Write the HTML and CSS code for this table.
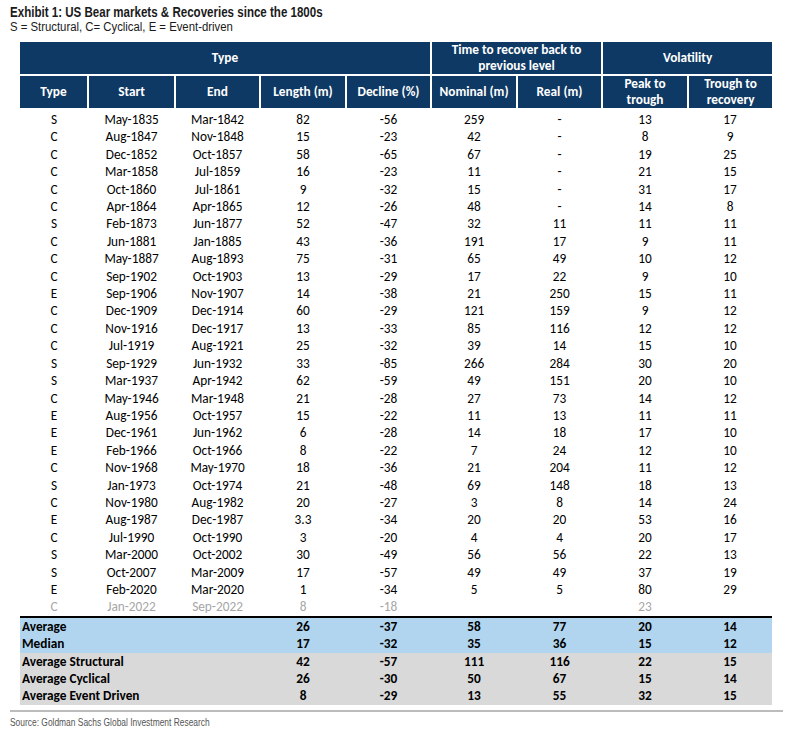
FILE: index.html
```html
<!DOCTYPE html>
<html>
<head>
<meta charset="utf-8">
<link rel="stylesheet" href="styles.css">
</head>
<body>
<div class="exhibit">
  <h1 class="title"><span class="squeeze t-squeeze">Exhibit 1: US Bear markets &amp; Recoveries since the 1800s</span></h1>
  <p class="subtitle"><span class="squeeze s-squeeze">S = Structural, C= Cyclical, E = Event-driven</span></p>
  <table class="bear">
    <colgroup>
      <col class="c-type"><col class="c87"><col class="c85"><col class="c86"><col class="c85"><col class="c86"><col class="c85"><col class="c86"><col class="c84">
    </colgroup>
    <thead>
      <tr class="h1">
        <th colspan="5">Type</th>
        <th colspan="2">Time to recover back to<br>previous level</th>
        <th colspan="2">Volatility</th>
      </tr>
      <tr class="h2">
        <th>Type</th><th>Start</th><th>End</th><th>Length (m)</th><th>Decline (%)</th><th>Nominal (m)</th><th>Real (m)</th><th>Peak to<br>trough</th><th>Trough to<br>recovery</th>
      </tr>
    </thead>
    <tbody class="data">
      <tr class="first"><td>S</td><td>May-1835</td><td>Mar-1842</td><td>82</td><td>-56</td><td>259</td><td>-</td><td>13</td><td>17</td></tr>
      <tr><td>C</td><td>Aug-1847</td><td>Nov-1848</td><td>15</td><td>-23</td><td>42</td><td>-</td><td>8</td><td>9</td></tr>
      <tr><td>C</td><td>Dec-1852</td><td>Oct-1857</td><td>58</td><td>-65</td><td>67</td><td>-</td><td>19</td><td>25</td></tr>
      <tr><td>C</td><td>Mar-1858</td><td>Jul-1859</td><td>16</td><td>-23</td><td>11</td><td>-</td><td>21</td><td>15</td></tr>
      <tr><td>C</td><td>Oct-1860</td><td>Jul-1861</td><td>9</td><td>-32</td><td>15</td><td>-</td><td>31</td><td>17</td></tr>
      <tr><td>C</td><td>Apr-1864</td><td>Apr-1865</td><td>12</td><td>-26</td><td>48</td><td>-</td><td>14</td><td>8</td></tr>
      <tr><td>S</td><td>Feb-1873</td><td>Jun-1877</td><td>52</td><td>-47</td><td>32</td><td>11</td><td>11</td><td>11</td></tr>
      <tr><td>C</td><td>Jun-1881</td><td>Jan-1885</td><td>43</td><td>-36</td><td>191</td><td>17</td><td>9</td><td>11</td></tr>
      <tr><td>C</td><td>May-1887</td><td>Aug-1893</td><td>75</td><td>-31</td><td>65</td><td>49</td><td>10</td><td>12</td></tr>
      <tr><td>C</td><td>Sep-1902</td><td>Oct-1903</td><td>13</td><td>-29</td><td>17</td><td>22</td><td>9</td><td>10</td></tr>
      <tr><td>E</td><td>Sep-1906</td><td>Nov-1907</td><td>14</td><td>-38</td><td>21</td><td>250</td><td>15</td><td>11</td></tr>
      <tr><td>C</td><td>Dec-1909</td><td>Dec-1914</td><td>60</td><td>-29</td><td>121</td><td>159</td><td>9</td><td>12</td></tr>
      <tr><td>C</td><td>Nov-1916</td><td>Dec-1917</td><td>13</td><td>-33</td><td>85</td><td>116</td><td>12</td><td>12</td></tr>
      <tr><td>C</td><td>Jul-1919</td><td>Aug-1921</td><td>25</td><td>-32</td><td>39</td><td>14</td><td>15</td><td>10</td></tr>
      <tr><td>S</td><td>Sep-1929</td><td>Jun-1932</td><td>33</td><td>-85</td><td>266</td><td>284</td><td>30</td><td>20</td></tr>
      <tr><td>S</td><td>Mar-1937</td><td>Apr-1942</td><td>62</td><td>-59</td><td>49</td><td>151</td><td>20</td><td>10</td></tr>
      <tr><td>C</td><td>May-1946</td><td>Mar-1948</td><td>21</td><td>-28</td><td>27</td><td>73</td><td>14</td><td>12</td></tr>
      <tr><td>E</td><td>Aug-1956</td><td>Oct-1957</td><td>15</td><td>-22</td><td>11</td><td>13</td><td>11</td><td>11</td></tr>
      <tr><td>E</td><td>Dec-1961</td><td>Jun-1962</td><td>6</td><td>-28</td><td>14</td><td>18</td><td>17</td><td>10</td></tr>
      <tr><td>E</td><td>Feb-1966</td><td>Oct-1966</td><td>8</td><td>-22</td><td>7</td><td>24</td><td>12</td><td>10</td></tr>
      <tr><td>C</td><td>Nov-1968</td><td>May-1970</td><td>18</td><td>-36</td><td>21</td><td>204</td><td>11</td><td>12</td></tr>
      <tr><td>S</td><td>Jan-1973</td><td>Oct-1974</td><td>21</td><td>-48</td><td>69</td><td>148</td><td>18</td><td>13</td></tr>
      <tr><td>C</td><td>Nov-1980</td><td>Aug-1982</td><td>20</td><td>-27</td><td>3</td><td>8</td><td>14</td><td>24</td></tr>
      <tr><td>E</td><td>Aug-1987</td><td>Dec-1987</td><td>3.3</td><td>-34</td><td>20</td><td>20</td><td>53</td><td>16</td></tr>
      <tr><td>C</td><td>Jul-1990</td><td>Oct-1990</td><td>3</td><td>-20</td><td>4</td><td>4</td><td>20</td><td>17</td></tr>
      <tr><td>S</td><td>Mar-2000</td><td>Oct-2002</td><td>30</td><td>-49</td><td>56</td><td>56</td><td>22</td><td>13</td></tr>
      <tr><td>S</td><td>Oct-2007</td><td>Mar-2009</td><td>17</td><td>-57</td><td>49</td><td>49</td><td>37</td><td>19</td></tr>
      <tr><td>E</td><td>Feb-2020</td><td>Mar-2020</td><td>1</td><td>-34</td><td>5</td><td>5</td><td>80</td><td>29</td></tr>
      <tr class="current"><td>C</td><td>Jan-2022</td><td>Sep-2022</td><td>8</td><td>-18</td><td></td><td></td><td>23</td><td></td></tr>
    </tbody>
    <tbody class="summary">
      <tr class="blue top"><td colspan="3" class="label">Average</td><td>26</td><td>-37</td><td>58</td><td>77</td><td>20</td><td>14</td></tr>
      <tr class="blue"><td colspan="3" class="label">Median</td><td>17</td><td>-32</td><td>35</td><td>36</td><td>15</td><td>12</td></tr>
      <tr class="grey"><td colspan="3" class="label">Average Structural</td><td>42</td><td>-57</td><td>111</td><td>116</td><td>22</td><td>15</td></tr>
      <tr class="grey"><td colspan="3" class="label">Average Cyclical</td><td>26</td><td>-30</td><td>50</td><td>67</td><td>15</td><td>14</td></tr>
      <tr class="grey"><td colspan="3" class="label">Average Event Driven</td><td>8</td><td>-29</td><td>13</td><td>55</td><td>32</td><td>15</td></tr>
    </tbody>
  </table>
  <div class="rule"></div>
  <p class="source"><span class="squeeze src-squeeze">Source: Goldman Sachs Global Investment Research</span></p>
</div>
</body>
</html>
```
FILE: styles.css
```css
html, body {
  margin: 0;
  padding: 0;
  background: #ffffff;
}
.exhibit {
  padding: 4px 0 0 10px;
  width: 773px;
}
.squeeze {
  display: inline-block;
  white-space: nowrap;
  transform-origin: 0 50%;
}
.t-squeeze { transform: scaleX(0.77); }
.s-squeeze { transform: scaleX(0.945); }
.src-squeeze { transform: scaleX(0.765); }
.title {
  margin: 0;
  font-family: "Liberation Sans", Arial, sans-serif;
  font-weight: bold;
  font-size: 15px;
  line-height: 16px;
  color: #1a1a1a;
}
.subtitle {
  margin: 0;
  font-family: "Liberation Sans", Arial, sans-serif;
  font-size: 12px;
  line-height: 15px;
  color: #1a1a1a;
}
.bear {
  margin: 7px 0 0 10px;
  border-collapse: collapse;
  table-layout: fixed;
  width: 752px;
  font-family: Carlito, Lato, "Liberation Sans", sans-serif;
  font-size: 13.3px;
  color: #000000;
}
.c-type { width: 68px; }
.c87 { width: 87px; }
.c85 { width: 85px; }
.c86 { width: 86px; }
.c84 { width: 84px; }
.bear th {
  background: #0e3964;
  color: #ffffff;
  font-weight: bold;
  line-height: 16px;
  padding: 0;
  border: 2px solid #ffffff;
  text-align: center;
}
.bear thead tr th:first-child { border-left: 0; }
.bear thead tr th:last-child { border-right: 0; }
.h1 th { height: 30px; border-top: 0; }
.h2 th { height: 32px; }
.bear td {
  padding: 0;
  height: 17.4px;
  line-height: 17.4px;
  text-align: center;
  white-space: nowrap;
}
.data .first td { padding-top: 1px; }
.current td { color: #a6a6a6; }
.summary td { font-weight: bold; }
.summary .top td { border-top: 2px solid #000000; }
.summary .blue td { background: #b1d5ef; }
.summary .grey td { background: #d9d9d9; }
.summary td.label {
  text-align: left;
  padding-left: 2px;
}
.rule {
  margin-top: 5px;
  width: 773px;
  height: 2px;
  background: #bcbcbc;
}
.source {
  margin: 4px 0 0 0;
  font-family: "Liberation Sans", Arial, sans-serif;
  font-size: 11px;
  line-height: 13px;
  color: #555555;
}
```
